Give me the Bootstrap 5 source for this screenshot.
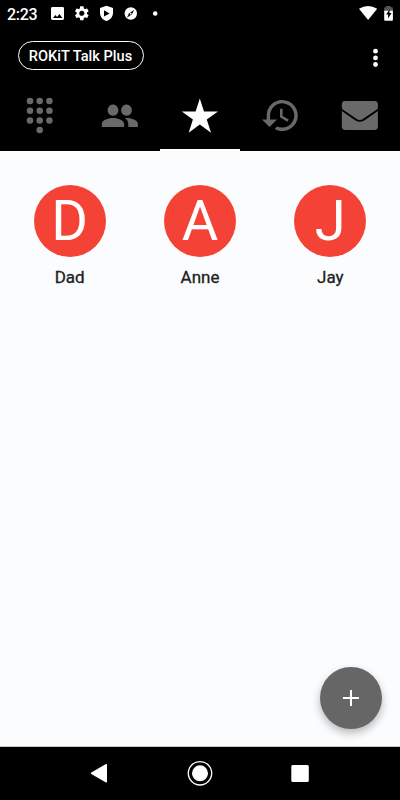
<!DOCTYPE html>
<html lang="en">
<head>
<meta charset="utf-8">
<meta name="viewport" content="width=device-width, initial-scale=1">
<title>ROKiT Talk Plus</title>
<link href="https://cdn.jsdelivr.net/npm/bootstrap@5.3.0/dist/css/bootstrap.min.css" rel="stylesheet">
<style>
  body { font-family: Roboto, "Liberation Sans", sans-serif; background: #000; color: #212121; overflow: hidden; }
  svg { display: block; flex: none; }
  .screen { width: 400px; height: 800px; background: #fbfcfe; }
  .black { background: #000; color: #fff; }
  .status { height: 28px; padding-left: 7px; padding-right: 6px; }
  .clock { font-size: 16px; font-weight: 500; line-height: 28px; width: 43px; letter-spacing: -.3px; padding-top: 1px; }
  .toolbar { height: 53px; padding: 13px 17px 0 17.5px; }
  .brand-pill { height: 29px; width: 126px; border: 1.3px solid #fff; border-radius: 15px; font-size: 14.6px; font-weight: 500; line-height: 28.6px; text-align: center; white-space: nowrap; }
  .tabs { height: 70px; }
  .tabs .nav-link { height: 70px; padding: 0; color: #696969; border-bottom: 2px solid transparent; border-radius: 0; }
  .tabs .nav-link.active { color: #fff; border-color: #fff; }
  .contacts { padding: 34px 4.5px 0; }
  .avatar { width: 72px; height: 72px; background: #f44336; color: #fff; font-size: 56px; line-height: 72px; text-align: center; }
  .person { font-size: 17px; font-weight: 400; -webkit-text-stroke: .3px #212121; line-height: 24px; margin-top: 8px; }
  .fab { width: 62px; height: 62px; margin: 0 18px 17px 0; background: #666; box-shadow: 0 4px 8px rgba(0,0,0,.28); border: 0; padding: 0; }
  .sysnav { height: 54px; border-top: 1px solid #c5c6c8; }
</style>
</head>
<body>
<div class="screen d-flex flex-column">
  <header class="black">
    <div class="status d-flex align-items-center">
      <span class="clock">2:23</span>
      <svg width="111" height="28" viewBox="50 0 111 28" fill="#fff">
        <path fill-rule="evenodd" d="M52.500 7h10.100q1.400 0 1.400 1.400v10.200q0 1.400-1.400 1.400H52.500q-1.500 0-1.500-1.400V8.400Q51 7 52.500 7zM53 17.900h9.400l-3-4-2.300 3-1.700-2z"/>
        <g transform="translate(73.200 4.600) scale(.72)"><path d="M19.140 12.940c.04-.3.060-.61.060-.94 0-.32-.02-.64-.07-.94l2.030-1.580a.49.490 0 0 0 .12-.61l-1.920-3.320a.488.488 0 0 0-.59-.22l-2.390.96c-.5-.38-1.030-.7-1.620-.94l-.36-2.540a.484.484 0 0 0-.48-.41h-3.840c-.24 0-.43.170-.47.410l-.36 2.540c-.59.240-1.130.570-1.620.94l-2.390-.96c-.22-.08-.47 0-.59.220L2.740 8.870c-.12.210-.08.470.120.610l2.030 1.580c-.05.3-.09.630-.09.940s.02.640.070.940l-2.030 1.580a.49.490 0 0 0-.12.610l1.920 3.320c.12.220.37.290.59.220l2.390-.96c.5.380 1.030.7 1.620.94l.36 2.540c.05.240.24.410.48.410h3.840c.24 0 .44-.17.470-.41l.36-2.540c.59-.24 1.130-.56 1.620-.94l2.390.96c.22.080.47 0 .59-.22l1.920-3.320c.12-.22.070-.47-.12-.61zM12 15.600A3.610 3.610 0 0 1 8.400 12c0-1.980 1.620-3.600 3.600-3.600s3.600 1.620 3.600 3.600-1.620 3.600-3.600 3.600z"/></g>
        <path fill-rule="evenodd" d="M106.500 5.700 113 8.100v4.700c0 3.900-2.600 7-6.500 8.300-3.900-1.300-6.500-4.400-6.500-8.300V8.100zM104 10.300v6.300l5.600-3.150z"/>
        <circle cx="130.800" cy="13.500" r="6.200"/>
        <path d="m134.300 9.800-2.400 4.500-5 3.500 2.300-4.500z" fill="#000"/><circle cx="130.700" cy="13.700" r=".9"/>
        <circle cx="155.200" cy="13.500" r="2.300"/>
      </svg>
      <svg class="ms-auto" width="36" height="28" viewBox="358 0 36 28">
        <path fill="#fff" d="M359 8.800q9-5.400 18.200 0L368.100 20z"/>
        <path fill="#555" d="M386.300 6h4.400v1.200h1.300q.9 0 .9.900V11h-8.700V8.100q0-.9.900-.9h1.200z"/>
        <path fill="#fff" d="M384.200 10.800h8.700v9q0 1-.9 1h-6.900q-.9 0-.9-1z"/>
        <path fill="#000" d="m389.600 9.300-3.500 5.300h2v4l3.400-5.700h-2z"/>
      </svg>
    </div>
    <div class="toolbar d-flex justify-content-between align-items-start">
      <div class="brand-pill">ROKiT Talk Plus</div>
      <svg width="15" height="29" viewBox="368 41 15 29" fill="#fff"><circle cx="375.500" cy="51.200" r="2.400"/><circle cx="375.500" cy="57.900" r="2.400"/><circle cx="375.500" cy="64.500" r="2.400"/></svg>
    </div>
    <nav class="tabs nav nav-fill flex-nowrap">
      <a class="nav-link nav-item w-25" href="#" aria-label="Keypad"><svg width="80" height="68" viewBox="0 81 80 68" fill="currentColor"><circle cx="30" cy="101" r="3.250"/><circle cx="39.700" cy="101" r="3.250"/><circle cx="49.400" cy="101" r="3.250"/><circle cx="30" cy="110.700" r="3.250"/><circle cx="39.700" cy="110.700" r="3.250"/><circle cx="49.400" cy="110.700" r="3.250"/><circle cx="30" cy="120.400" r="3.250"/><circle cx="39.700" cy="120.400" r="3.250"/><circle cx="49.400" cy="120.400" r="3.250"/><circle cx="39.700" cy="130.100" r="3.250"/></svg></a>
      <a class="nav-link nav-item w-25" href="#" aria-label="Contacts"><svg width="80" height="68" viewBox="80 81 80 68" fill="currentColor"><path d="M113 104.600a5.400 5.600 0 1 0 .01 0zM126.500 104.600a5.400 5.600 0 1 0 .01 0zM113 118c-5.500 0-11.200 2.400-11.200 6v3h22.300v-3c0-3.600-5.600-6-11.100-6zM126.500 118l-1.900.1c2.400 1.500 3.700 3.500 3.700 5.900v3h9.600v-3c0-3.600-5.800-6-11.400-6z"/></svg></a>
      <a class="nav-link nav-item w-25 active" href="#" aria-label="Favorites"><svg width="80" height="68" viewBox="160 81 80 68" fill="currentColor"><path d="m199.800 98.500 4.200 12.900h14l-11.200 8.200 4.200 13.100-11.200-8.100-11.100 8.100 4.200-13.100-11.100-8.200h13.800z"/></svg></a>
      <a class="nav-link nav-item w-25" href="#" aria-label="Recent calls"><svg width="80" height="68" viewBox="240 81 80 68" fill="currentColor"><path d="M282.200 100a15.500 15.500 0 0 0-15.500 15.500v4.100h-4.700l7.500 7.500 7.500-7.500h-6.900v-4.100a12.100 12.100 0 1 1 7 10.900l-2.400 2.600A15.500 15.500 0 1 0 282.200 100zM280 108.700v8.600l7.400 4.400 1.300-2.100-6.100-3.700v-7.200z"/></svg></a>
      <a class="nav-link nav-item w-25" href="#" aria-label="Messages"><svg width="80" height="68" viewBox="320 81 80 68" fill="currentColor"><path d="M345.300 101h29.100q3.500 0 3.500 3.400v3.200q0 1.100-1 1.900l-13.700 9.300q-3.400 2.400-6.800 0l-13.600-9.300q-1-.8-1-1.900v-3.200q0-3.400 3.500-3.400zM341.800 110.900l13.600 9.500q4.400 2.800 8.800 0l13.700-9.500v15.700q0 3.400-3.500 3.400h-29.100q-3.500 0-3.500-3.400z"/></svg></a>
    </nav>
  </header>
  <main class="flex-grow-1 d-flex flex-column">
    <div class="contacts row g-0 text-center">
      <div class="col-4 d-flex flex-column align-items-center"><div class="avatar rounded-circle">D</div><div class="person">Dad</div></div>
      <div class="col-4 d-flex flex-column align-items-center"><div class="avatar rounded-circle">A</div><div class="person">Anne</div></div>
      <div class="col-4 d-flex flex-column align-items-center"><div class="avatar rounded-circle">J</div><div class="person">Jay</div></div>
    </div>
    <button class="fab rounded-circle mt-auto align-self-end d-flex align-items-center justify-content-center" aria-label="Add contact">
      <svg width="20" height="20" viewBox="0 0 20 20" stroke="#fff" stroke-width="2"><path d="M2 10h16M10 2v16"/></svg>
    </button>
  </main>
  <footer class="sysnav black d-flex justify-content-center">
    <svg width="260" height="53" viewBox="70 747 260 53" fill="#fff">
      <path d="M91.300 772.400 105.500 764.300q1.500-.8 1.500.8v16.300q0 1.600-1.500.8L91.300 774.100q-1.200-.85 0-1.700z"/>
      <circle cx="200" cy="773.300" r="8"/><circle cx="200" cy="773.300" r="11.700" fill="none" stroke="#fff" stroke-width="1.300"/>
      <rect x="291.300" y="764.900" width="17.500" height="17.200" rx="1.500"/>
    </svg>
  </footer>
</div>
<script src="https://cdn.jsdelivr.net/npm/bootstrap@5.3.0/dist/js/bootstrap.bundle.min.js"></script>
</body>
</html>
